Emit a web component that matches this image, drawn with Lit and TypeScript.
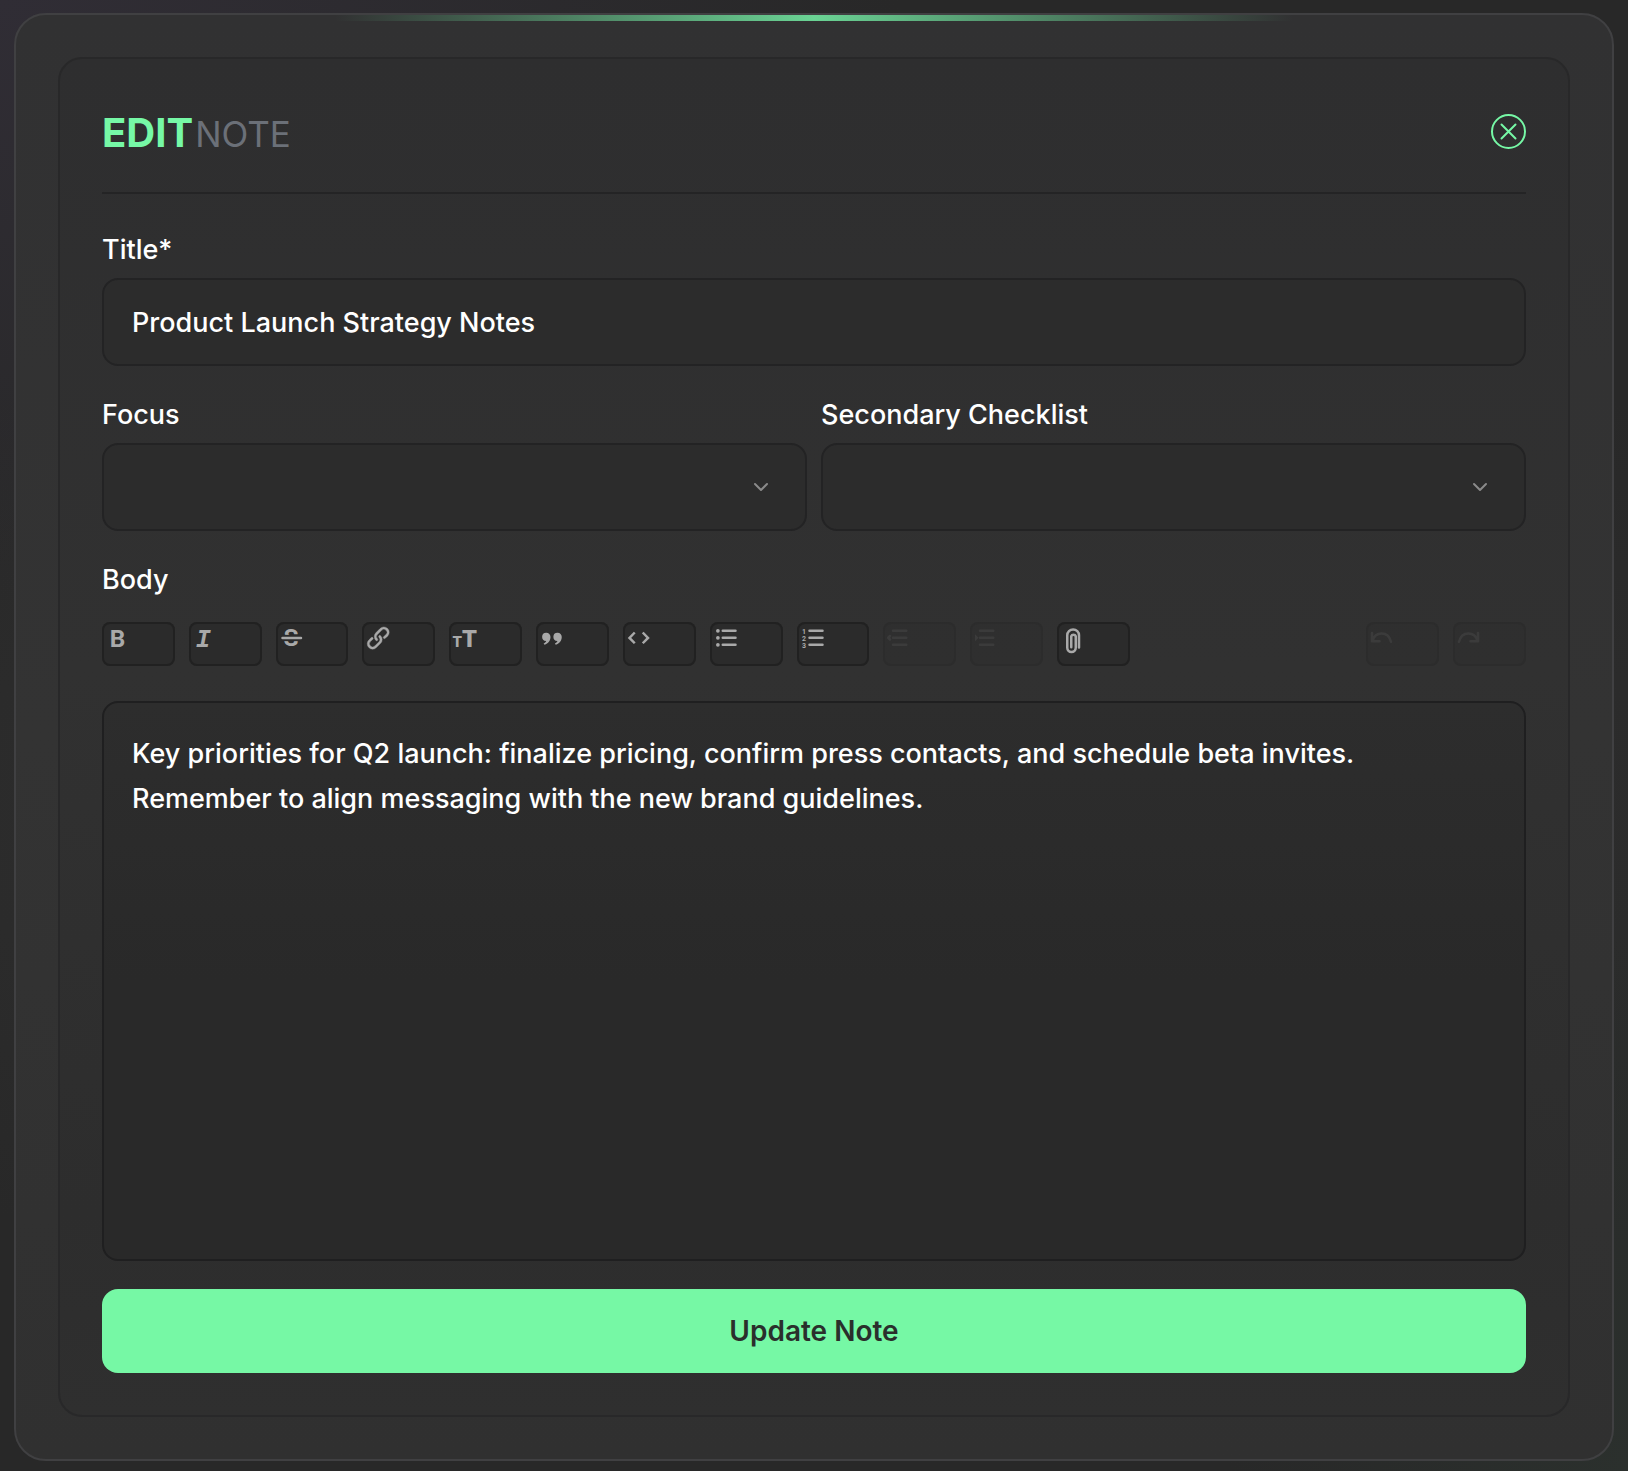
import { LitElement, html, css, svg, type SVGTemplateResult } from "lit";
import { customElement, state } from "lit/decorators.js";

interface Tool {
  label: string;
  icon: SVGTemplateResult;
  disabled?: boolean;
}

const lines = (x1: number, x2: number) => svg`
  <path class="line" d="M${x1} 6H${x2}M${x1} 11.6H${x2}M${x1} 17.2H${x2}" />`;

const editTools: Tool[] = [
  { label: "Bold", icon: svg`<text class="glyph" x="6.2" y="18.6" font-size="19.5">B</text>` },
  { label: "Italic", icon: svg`<text class="glyph slab" x="5.4" y="18.6" font-size="20">I</text>` },
  {
    label: "Strikethrough",
    icon: svg`
      <text class="glyph" x="6" y="18.4" font-size="19.5">S</text>
      <path class="gap" d="M4 11.8H21" />
      <path class="line" d="M5.2 11.8H20" />`,
  },
  {
    label: "Link",
    icon: svg`<g transform="translate(1.2 0)">
      <path class="fill edge" d="M9.88 13.7a4.3 4.3 0 0 1 0-6.07l3.37-3.37a4.26 4.26 0 0 1 6.07 0 4.3 4.3 0 0 1 0 6.06l-1.96 1.72a.91.91 0 1 1-1.3-1.3l1.97-1.71a2.46 2.46 0 0 0-3.48-3.48l-3.38 3.37a2.46 2.46 0 0 0 0 3.48.91.91 0 1 1-1.3 1.3z" />
      <path class="fill edge" d="M4.25 19.46a4.3 4.3 0 0 1 0-6.07l1.93-1.9a.91.91 0 1 1 1.3 1.3l-1.93 1.9a2.46 2.46 0 0 0 3.48 3.48l3.37-3.38c.96-.96.96-2.52 0-3.48a.91.91 0 1 1 1.3-1.3 4.3 4.3 0 0 1 0 6.07l-3.38 3.38a4.26 4.26 0 0 1-6.07 0z" />
    </g>`,
  },
  {
    label: "Heading",
    icon: svg`
      <text class="glyph heavy" x="2.8" y="19.2" font-size="12">T</text>
      <text class="glyph heavy" x="10.4" y="19.2" font-size="19">T</text>`,
  },
  {
    label: "Quote",
    icon: svg`
      <path class="fill" d="M8.3 7.6a3.3 3.3 0 0 1 3.3 3.4c0 3-1.8 5.2-4.8 6.2l-.7-1c1.2-.6 1.9-1.3 2-2a3.3 3.3 0 0 1 .2-6.6z" />
      <path class="fill" d="M17.3 7.6a3.3 3.3 0 0 1 3.3 3.4c0 3-1.8 5.2-4.8 6.2l-.7-1c1.2-.6 1.9-1.3 2-2a3.3 3.3 0 0 1 .2-6.6z" />`,
  },
  { label: "Code", icon: svg`<path class="line sharp" d="M9.4 7.4 5.2 11.7l4.2 4.3M15.8 7.4l4.2 4.3-4.2 4.3" />` },
  {
    label: "Bullets",
    icon: svg`${lines(10.2, 20.4)}
      <circle class="fill" cx="6.3" cy="6" r="1.5" />
      <circle class="fill" cx="6.3" cy="11.6" r="1.5" />
      <circle class="fill" cx="6.3" cy="17.2" r="1.5" />`,
  },
  {
    label: "Numbers",
    icon: svg`${lines(10, 20.4)}
      <text class="glyph" x="4" y="8.2" font-size="5.6">1</text>
      <text class="glyph" x="4" y="13.8" font-size="5.6">2</text>
      <text class="glyph" x="4" y="19.4" font-size="5.6">3</text>`,
  },
  {
    label: "Decrease level",
    disabled: true,
    icon: svg`${lines(8, 18.6)}<path class="line" d="M5.6 10.2 4.2 11.6l1.4 1.4" />`,
  },
  {
    label: "Increase level",
    disabled: true,
    icon: svg`${lines(8, 18.6)}<path class="fill" d="M4 8.8 6.8 11.6 4 14.4z" />`,
  },
  {
    label: "Attach files",
    icon: svg`<path class="line" d="M17.6 19.4V9.6a4.7 4.7 0 0 0-9.4 0v10a3.4 3.4 0 0 0 6.8 0v-9.2a1.9 1.9 0 0 0-3.6 0v8.8" />`,
  },
];

const historyTools: Tool[] = [
  {
    label: "Undo",
    disabled: true,
    icon: svg`<path class="line" d="M4.8 7.8v6.6h6M5.2 14C7.6 6.4 17.6 6 20 14.8" />`,
  },
  {
    label: "Redo",
    disabled: true,
    icon: svg`<path class="line" d="M20 7.8v6.6h-6M19.6 14C17.2 6.4 7.2 6 4.8 14.8" />`,
  },
];

@customElement("app-root")
export class AppRoot extends LitElement {
  static styles = css`
    :host {
      display: block;
      color: #fff;
      font: 500 27px/42px Inter, "Liberation Sans", sans-serif;
    }
    *,
    *::before {
      box-sizing: border-box;
    }
    .page {
      min-height: 100vh;
      padding: 13px 14px 10px;
      background:
        radial-gradient(ellipse 900px 600px at 0 0, #302d35, transparent),
        radial-gradient(ellipse 400px 600px at 100% 100%, #2b302d, transparent),
        radial-gradient(ellipse 1400px 500px at 50% 55%, #303030, transparent),
        #282828;
    }
    .card {
      position: relative;
      padding: 42px;
      border: 2px solid #404042;
      border-radius: 32px;
      background: linear-gradient(#313132, #333333 50%, #303030);
    }
    .card::before {
      content: "";
      position: absolute;
      top: 0;
      left: 20%;
      right: 20%;
      height: 6px;
      background: linear-gradient(90deg, transparent, #6ad394, transparent);
    }
    .panel {
      padding: 42px;
      border: 2px solid #282829;
      border-radius: 24px;
      background: linear-gradient(#2e2e2f, #313131 45%, #2d2d2d 85%, #2f2f2f);
    }
    .header {
      display: flex;
      align-items: center;
      justify-content: space-between;
      height: 93px;
      padding-bottom: 31px;
      border-bottom: 2px solid #242425;
    }
    .heading {
      display: flex;
      align-items: baseline;
      gap: 2px;
      margin: 0;
      padding-top: 5px;
      font-size: 35px;
      font-weight: 400;
      color: #6b7078;
    }
    .heading strong {
      font-size: 40px;
      font-weight: 700;
      color: #76f8a6;
    }
    button {
      margin: 0;
      padding: 0;
      border: 0;
      font: inherit;
      color: inherit;
      background: none;
      cursor: pointer;
    }
    .close {
      display: flex;
      color: #76f8a6;
    }
    .close svg {
      width: 35px;
      height: 35px;
      fill: none;
      stroke: currentColor;
      stroke-width: 2;
      stroke-linecap: round;
    }
    .form {
      display: flex;
      flex-direction: column;
      gap: 28px;
      padding-top: 35px;
    }
    .row {
      display: grid;
      grid-template-columns: 1fr 1fr;
      gap: 14px;
    }
    .field {
      display: flex;
      flex-direction: column;
      gap: 7px;
    }
    .control {
      display: block;
      width: 100%;
      height: 88px;
      margin: 0;
      padding: 0 28px;
      border: 2px solid #232324;
      border-radius: 16px;
      outline: none;
      appearance: none;
      font: inherit;
      color: inherit;
      background: #2c2c2c;
    }
    .picker {
      display: grid;
      align-items: center;
    }
    .picker > * {
      grid-area: 1 / 1;
    }
    .chevron {
      justify-self: end;
      width: 16px;
      height: 16px;
      margin-right: 38px;
      fill: none;
      stroke: #8a8a8a;
      stroke-width: 2;
      stroke-linecap: round;
      stroke-linejoin: round;
      pointer-events: none;
    }
    .toolbar {
      display: flex;
      justify-content: space-between;
      gap: 14px;
      margin: 14px 0 28px;
    }
    .group {
      display: flex;
      gap: 14px;
      width: 160px;
    }
    .group.wide {
      flex: 1;
      max-width: 1028px;
    }
    .tool {
      display: flex;
      flex: 1;
      height: 44px;
      border-radius: 8px;
      color: #a9a9a9;
      background: #2b2b2b;
      box-shadow: inset 0 0 0 2px #212121;
    }
    .tool:disabled {
      color: #555555;
      opacity: 0.3;
      cursor: default;
    }
    .tool svg {
      width: 30px;
      height: 30px;
      overflow: visible;
    }
    .line {
      fill: none;
      stroke: currentColor;
      stroke-width: 2;
      stroke-linecap: round;
      stroke-linejoin: round;
    }
    .sharp {
      stroke-linecap: butt;
      stroke-linejoin: miter;
    }
    .gap {
      stroke: #2b2b2b;
      stroke-width: 5;
    }
    .fill {
      fill: currentColor;
    }
    .edge {
      stroke: currentColor;
      stroke-width: 0.3;
    }
    .glyph {
      fill: currentColor;
      font-family: Roboto, "Liberation Sans", sans-serif;
      font-weight: 700;
    }
    .heavy {
      font-weight: 900;
    }
    .slab {
      font-family: "Liberation Mono", monospace;
      font-style: italic;
    }
    .editor {
      height: 560px;
      padding: 28px;
      line-height: 45px;
      resize: none;
      background: linear-gradient(#2d2d2d, #292929 50%);
      border-color: #1f1f20;
    }
    .submit {
      height: 84px;
      border-radius: 16px;
      font-size: 28px;
      font-weight: 600;
      color: #2a2f2c;
      background: #76f8a5;
    }
  `;

  @state() private noteTitle = "Product Launch Strategy Notes";
  @state() private body =
    "Key priorities for Q2 launch: finalize pricing, confirm press contacts, and schedule beta invites.\nRemember to align messaging with the new brand guidelines.";

  private renderTool(tool: Tool) {
    return html`<button class="tool" type="button" aria-label=${tool.label} ?disabled=${tool.disabled}>
      <svg viewBox="0 -1 24 24" aria-hidden="true">${tool.icon}</svg>
    </button>`;
  }

  private renderSelect(id: string, label: string) {
    return html`<div class="field">
      <label for=${id}>${label}</label>
      <div class="picker">
        <select class="control" id=${id}>
          <option value=""></option>
        </select>
        <svg class="chevron" viewBox="0 0 16 16" aria-hidden="true"><path d="M2 5l6 6 6-6" /></svg>
      </div>
    </div>`;
  }

  render() {
    return html`<main class="page">
      <div class="card">
        <section class="panel">
          <header class="header">
            <h1 class="heading"><strong>EDIT</strong> <span>NOTE</span></h1>
            <button class="close" type="button" aria-label="Close">
              <svg viewBox="0 0 35 35" aria-hidden="true">
                <circle cx="17.5" cy="17.5" r="16.5" />
                <path d="M10.5 10.5l14 14M24.5 10.5l-14 14" />
              </svg>
            </button>
          </header>
          <form class="form" @submit=${(e: Event) => e.preventDefault()}>
            <div class="field">
              <label for="title">Title*</label>
              <input
                class="control"
                id="title"
                type="text"
                required
                .value=${this.noteTitle}
                @input=${(e: Event) => (this.noteTitle = (e.target as HTMLInputElement).value)}
              />
            </div>
            <div class="row">
              ${this.renderSelect("focus", "Focus")} ${this.renderSelect("checklist", "Secondary Checklist")}
            </div>
            <div class="field">
              <label for="body">Body</label>
              <div class="toolbar" role="toolbar" aria-label="Formatting">
                <div class="group wide">${editTools.map((t) => this.renderTool(t))}</div>
                <div class="group">${historyTools.map((t) => this.renderTool(t))}</div>
              </div>
              <textarea
                class="control editor"
                id="body"
                spellcheck="false"
                .value=${this.body}
                @input=${(e: Event) => (this.body = (e.target as HTMLTextAreaElement).value)}
              ></textarea>
            </div>
            <button class="submit" type="submit">Update Note</button>
          </form>
        </section>
      </div>
    </main>`;
  }
}
